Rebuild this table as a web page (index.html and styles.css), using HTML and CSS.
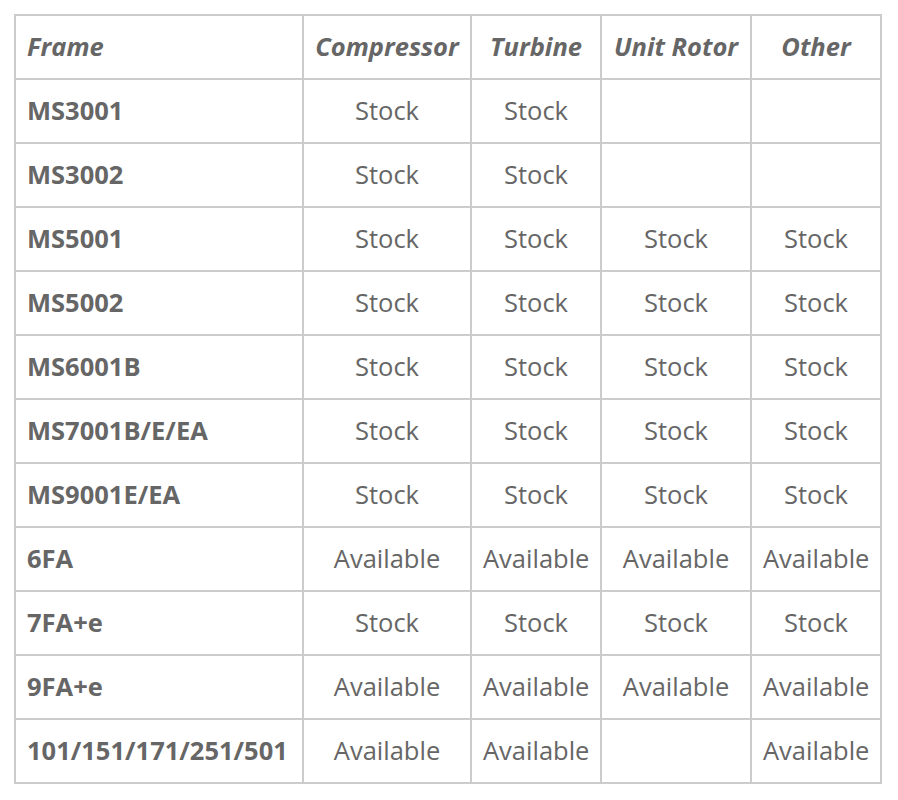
FILE: index.html
```html
<!DOCTYPE html>
<html>
<head>
<meta charset="utf-8">
<link rel="stylesheet" href="styles.css">
</head>
<body>
<table class="frames">
  <colgroup>
    <col class="c-frame">
    <col class="c-comp">
    <col class="c-turb">
    <col class="c-unit">
    <col class="c-other">
  </colgroup>
  <thead>
    <tr><th class="left">Frame</th><th>Compressor</th><th>Turbine</th><th>Unit Rotor</th><th>Other</th></tr>
  </thead>
  <tbody>
    <tr><td class="name">MS3001</td><td>Stock</td><td>Stock</td><td></td><td></td></tr>
    <tr><td class="name">MS3002</td><td>Stock</td><td>Stock</td><td></td><td></td></tr>
    <tr><td class="name">MS5001</td><td>Stock</td><td>Stock</td><td>Stock</td><td>Stock</td></tr>
    <tr><td class="name">MS5002</td><td>Stock</td><td>Stock</td><td>Stock</td><td>Stock</td></tr>
    <tr><td class="name">MS6001B</td><td>Stock</td><td>Stock</td><td>Stock</td><td>Stock</td></tr>
    <tr><td class="name">MS7001B/E/EA</td><td>Stock</td><td>Stock</td><td>Stock</td><td>Stock</td></tr>
    <tr><td class="name">MS9001E/EA</td><td>Stock</td><td>Stock</td><td>Stock</td><td>Stock</td></tr>
    <tr><td class="name">6FA</td><td>Available</td><td>Available</td><td>Available</td><td>Available</td></tr>
    <tr><td class="name">7FA+e</td><td>Stock</td><td>Stock</td><td>Stock</td><td>Stock</td></tr>
    <tr><td class="name">9FA+e</td><td>Available</td><td>Available</td><td>Available</td><td>Available</td></tr>
    <tr><td class="name">101/151/171/251/501</td><td>Available</td><td>Available</td><td></td><td>Available</td></tr>
  </tbody>
</table>
</body>
</html>
```

FILE: styles.css
```css
html, body {
  margin: 0;
  padding: 0;
  background: #fff;
}
body {
  padding: 14px;
  font-family: "Open Sans", "Liberation Sans", sans-serif;
  color: #666;
}
.frames {
  border-collapse: collapse;
  table-layout: fixed;
  width: 868px;
  font-size: 25.5px;
}
.c-frame { width: 288px; }
.c-comp { width: 168px; }
.c-turb { width: 130px; }
.c-unit { width: 150px; }
.c-other { width: 130px; }
.frames th,
.frames td {
  border: 2px solid #cccccc;
  height: 64px;
  padding: 0 11px 2px;
  text-align: center;
  vertical-align: middle;
  white-space: nowrap;
  box-sizing: border-box;
}
.frames th {
  font-weight: 700;
  font-style: italic;
}
.frames th.left,
.frames td.name {
  text-align: left;
}
.frames td.name {
  font-weight: 700;
}
```
